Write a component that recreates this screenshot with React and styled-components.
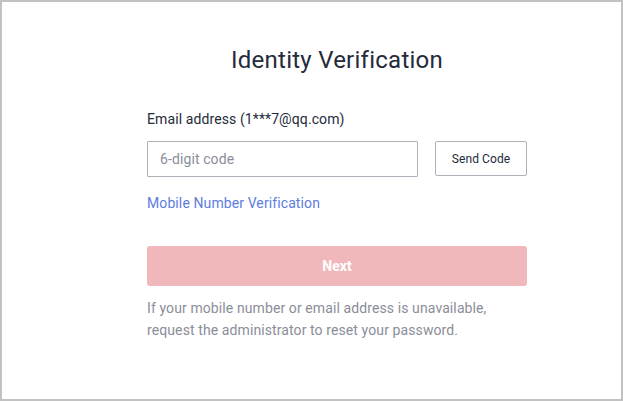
import React from "react";
import styled, { createGlobalStyle } from "styled-components";

const GlobalStyle = createGlobalStyle`
  html, body {
    margin: 0;
    padding: 0;
    background: #fff;
  }
  * {
    box-sizing: border-box;
  }
`;

const Frame = styled.div`
  width: 623px;
  height: 401px;
  border: 2px solid #c2c2c2;
  background: #fff;
  font-family: Roboto, "Liberation Sans", sans-serif;
  letter-spacing: 0.1px;
  display: flex;
  justify-content: flex-start;
  padding: 42px 0 0 145px;
`;

const Form = styled.div`
  width: 380px;
  display: flex;
  flex-direction: column;
`;

const Title = styled.h1`
  margin: 0 0 32px;
  font-size: 24px;
  line-height: 32px;
  font-weight: 400;
  letter-spacing: 0.25px;
  color: #252b3a;
  text-align: center;
`;

const Label = styled.div`
  font-size: 14px;
  line-height: 22px;
  color: #252b3a;
  margin-bottom: 11px;
`;

const CodeRow = styled.div`
  display: flex;
  align-items: flex-start;
  gap: 17px;
`;

const CodeInput = styled.input`
  flex: 1;
  height: 36px;
  border: 1px solid #adb0b8;
  border-radius: 1px;
  padding: 0 12px;
  font-family: inherit;
  font-size: 14px;
  letter-spacing: 0.1px;
  color: #252b3a;
  outline: none;

  &::placeholder {
    color: #8a8e99;
  }
`;

const SendButton = styled.button`
  width: 92px;
  height: 35px;
  border: 1px solid #adb0b8;
  border-radius: 2px;
  background: #fff;
  font-family: inherit;
  font-size: 12px;
  letter-spacing: 0.1px;
  color: #252b3a;
  padding: 0;
`;

const Link = styled.a`
  margin-top: 15px;
  font-size: 14px;
  line-height: 22px;
  color: #5e7ce0;
  text-decoration: none;
  cursor: pointer;
  align-self: flex-start;
`;

const NextButton = styled.button`
  margin-top: 32px;
  height: 40px;
  border: none;
  border-radius: 3px;
  background: #f0b8bb;
  color: #fff;
  font-family: inherit;
  font-size: 14px;
  font-weight: 700;
  cursor: not-allowed;
`;

const Hint = styled.p`
  margin: 11px 0 0;
  font-size: 14px;
  line-height: 22px;
  color: #8a8e99;
`;

export default function App() {
  return (
    <>
      <GlobalStyle />
      <Frame>
        <Form>
          <Title>Identity Verification</Title>
          <Label>Email address (1***7@qq.com)</Label>
          <CodeRow>
            <CodeInput placeholder="6-digit code" />
            <SendButton>Send Code</SendButton>
          </CodeRow>
          <Link>Mobile Number Verification</Link>
          <NextButton disabled>Next</NextButton>
          <Hint>
            If your mobile number or email address is unavailable,
            <br />
            request the administrator to reset your password.
          </Hint>
        </Form>
      </Frame>
    </>
  );
}
